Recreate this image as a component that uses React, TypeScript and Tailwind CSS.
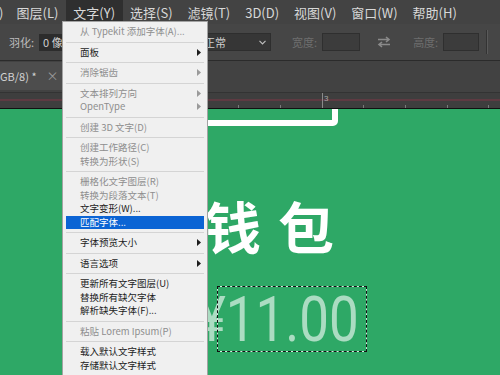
import React from "react";

type Item = { t: string; dis?: boolean; sub?: boolean; hl?: boolean };

const groups: Item[][] = [
  [{ t: "从 Typekit 添加字体(A)...", dis: true }],
  [{ t: "面板", sub: true }],
  [{ t: "消除锯齿", dis: true, sub: true }],
  [
    { t: "文本排列方向", dis: true, sub: true },
    { t: "OpenType", dis: true, sub: true },
  ],
  [{ t: "创建 3D 文字(D)", dis: true }],
  [
    { t: "创建工作路径(C)", dis: true },
    { t: "转换为形状(S)", dis: true },
  ],
  [
    { t: "栅格化文字图层(R)", dis: true },
    { t: "转换为段落文本(T)", dis: true },
    { t: "文字变形(W)..." },
    { t: "匹配字体...", hl: true },
  ],
  [{ t: "字体预览大小", sub: true }],
  [{ t: "语言选项", sub: true }],
  [{ t: "更新所有文字图层(U)" }, { t: "替换所有缺欠字体" }, { t: "解析缺失字体(F)..." }],
  [{ t: "粘贴 Lorem Ipsum(P)", dis: true }],
  [{ t: "载入默认文字样式" }, { t: "存储默认文字样式" }],
];

const topMenu = ["图层(L)", "文字(Y)", "选择(S)", "滤镜(T)", "3D(D)", "视图(V)", "窗口(W)", "帮助(H)"];

function Arrow({ color }: { color: string }) {
  return (
    <svg width="4" height="7" viewBox="0 0 4 7" className="absolute right-[3px] top-[3px]">
      <path d="M0 0 L4 3.5 L0 7 Z" fill={color} />
    </svg>
  );
}

function TypeMenu() {
  return (
    <div className="absolute left-[62px] top-[21px] w-[146px] h-[360px] bg-[#f0f0f0] border border-[#a3a3a3] pt-[3px] font-['Noto_Sans_CJK_SC',sans-serif] text-[9.5px] leading-none">
      {groups.map((g, gi) => (
        <div key={gi}>
          {gi > 0 && (
            <div className="h-[7px] flex items-center px-[3px]">
              <div className="h-px w-full bg-[#d4d4d4]" />
            </div>
          )}
          {g.map((it) => (
            <div
              key={it.t}
              className={
                "relative h-[13.5px] mx-[3px] pl-[14px] flex items-center whitespace-nowrap " +
                (it.hl ? "bg-[#0b64d4] text-white" : it.dis ? "text-[#8e8e8e]" : "text-[#1c1c1c]")
              }
            >
              {it.t}
              {it.sub && <Arrow color={it.dis ? "#9a9a9a" : "#1c1c1c"} />}
            </div>
          ))}
        </div>
      ))}
    </div>
  );
}

function SwapIcon() {
  return (
    <svg width="14" height="12" viewBox="0 0 14 12" fill="none" stroke="#8a8a8a" strokeWidth="1.6">
      <path d="M1 3.5 H12 M9 1 L12 3.5 L9 6" />
      <path d="M13 8.5 H2 M5 6 L2 8.5 L5 11" />
    </svg>
  );
}

export default function App() {
  return (
    <div className="relative w-[500px] h-[375px] overflow-hidden flex flex-col bg-[#424242] font-['Noto_Sans_CJK_SC',sans-serif]">
      {/* menu bar */}
      <div className="h-[24px] flex items-center bg-[#434343] text-[#d8d8d8] text-[13px] leading-none">
        <span className="w-[10px] -ml-[1px]">)</span>
        {topMenu.map((m) => (
          <span
            key={m}
            className={"h-full flex items-center px-[7.5px] " + (m === "文字(Y)" ? "bg-[#2f2f2f]" : "")}
          >
            {m}
          </span>
        ))}
      </div>

      {/* options bar */}
      <div className="h-[37px] flex items-center bg-[#464646] text-[11px] leading-none border-b border-[#2b2b2b]">
        <span className="ml-[9px] text-[#bdbdbd]">羽化:</span>
        <div className="ml-[5px] h-[17px] w-[40px] bg-[#2c2c2c] flex items-center pl-[4px] text-[#d0d0d0]">0 像</div>
        <div className="ml-[122px] h-[18px] w-[70px] bg-[#363636] border border-[#2e2e2e] flex items-center justify-between pl-[2px] pr-[4px] text-[#cfcfcf]">
          <span>正常</span>
          <svg width="7" height="5" viewBox="0 0 7 5">
            <path d="M0.5 0.8 L3.5 3.8 L6.5 0.8" stroke="#bdbdbd" strokeWidth="1.2" fill="none" />
          </svg>
        </div>
        <span className="ml-[21px] text-[#6e6e6e]">宽度:</span>
        <div className="ml-[5px] h-[18px] w-[38px] bg-[#3c3c3c] border border-[#2f2f2f]" />
        <div className="ml-[17px]">
          <SwapIcon />
        </div>
        <span className="ml-[22px] text-[#6e6e6e]">高度:</span>
        <div className="ml-[5px] h-[18px] w-[36px] bg-[#3c3c3c] border border-[#2f2f2f]" />
        <div className="ml-[7px] h-[24px] w-[2px] border-l border-[#333] border-r border-r-[#5a5a5a]" />
      </div>

      {/* tab bar */}
      <div className="h-[31px] flex items-end bg-[#424242]">
        <div className="h-[28px] w-[62px] mb-[2px] bg-[#4d4d4d] flex items-center text-[11px] leading-none text-[#d2d2d2] whitespace-nowrap">
          <span>GB/8) *</span>
          <span className="ml-[10px] text-[#9a9a9a] text-[12px]">×</span>
        </div>
      </div>

      {/* ruler */}
      <div className="relative h-[17px] bg-[#3e3e3e] border-t border-[#333] border-b border-b-[#111]">
        <div className="absolute left-0 right-0 top-[6px] h-[2px] bg-[#5e3a42]" />
        <div className="absolute left-[322px] top-0 bottom-0 w-px bg-[#8a8a8a]" />
        <span className="absolute left-[324px] top-[2px] text-[8px] leading-none text-[#a8a8a8] font-['Liberation_Sans',sans-serif]">3</span>
        {[238, 280, 363, 405, 447, 488].map((x) => (
          <div key={x} className="absolute bottom-0 h-[3px] w-px bg-[#7a7a7a]" style={{ left: x }} />
        ))}
      </div>

      {/* canvas */}
      <div className="relative flex-1 bg-[#2ea866] overflow-hidden">
        <div className="absolute left-[100px] -top-[24px] w-[238px] h-[41px] border-[6px] border-white rounded-[5px]" />
        <div className="absolute left-[205px] top-[88px] text-[56px] leading-none font-bold text-white tracking-[17px] whitespace-nowrap font-['Noto_Sans_CJK_SC',serif]">
          钱包
        </div>
        <div className="absolute left-[198px] top-[179px] text-[63px] leading-none font-normal text-white/60 whitespace-nowrap font-['Roboto',sans-serif] scale-x-[0.84] origin-left">
          ¥11.00
        </div>
        <div className="absolute left-[217px] top-[177px] w-[150px] h-[66px] border border-white/80">
          <div className="absolute -inset-px border border-dashed border-[#111]" />
        </div>
      </div>

      <TypeMenu />
    </div>
  );
}
